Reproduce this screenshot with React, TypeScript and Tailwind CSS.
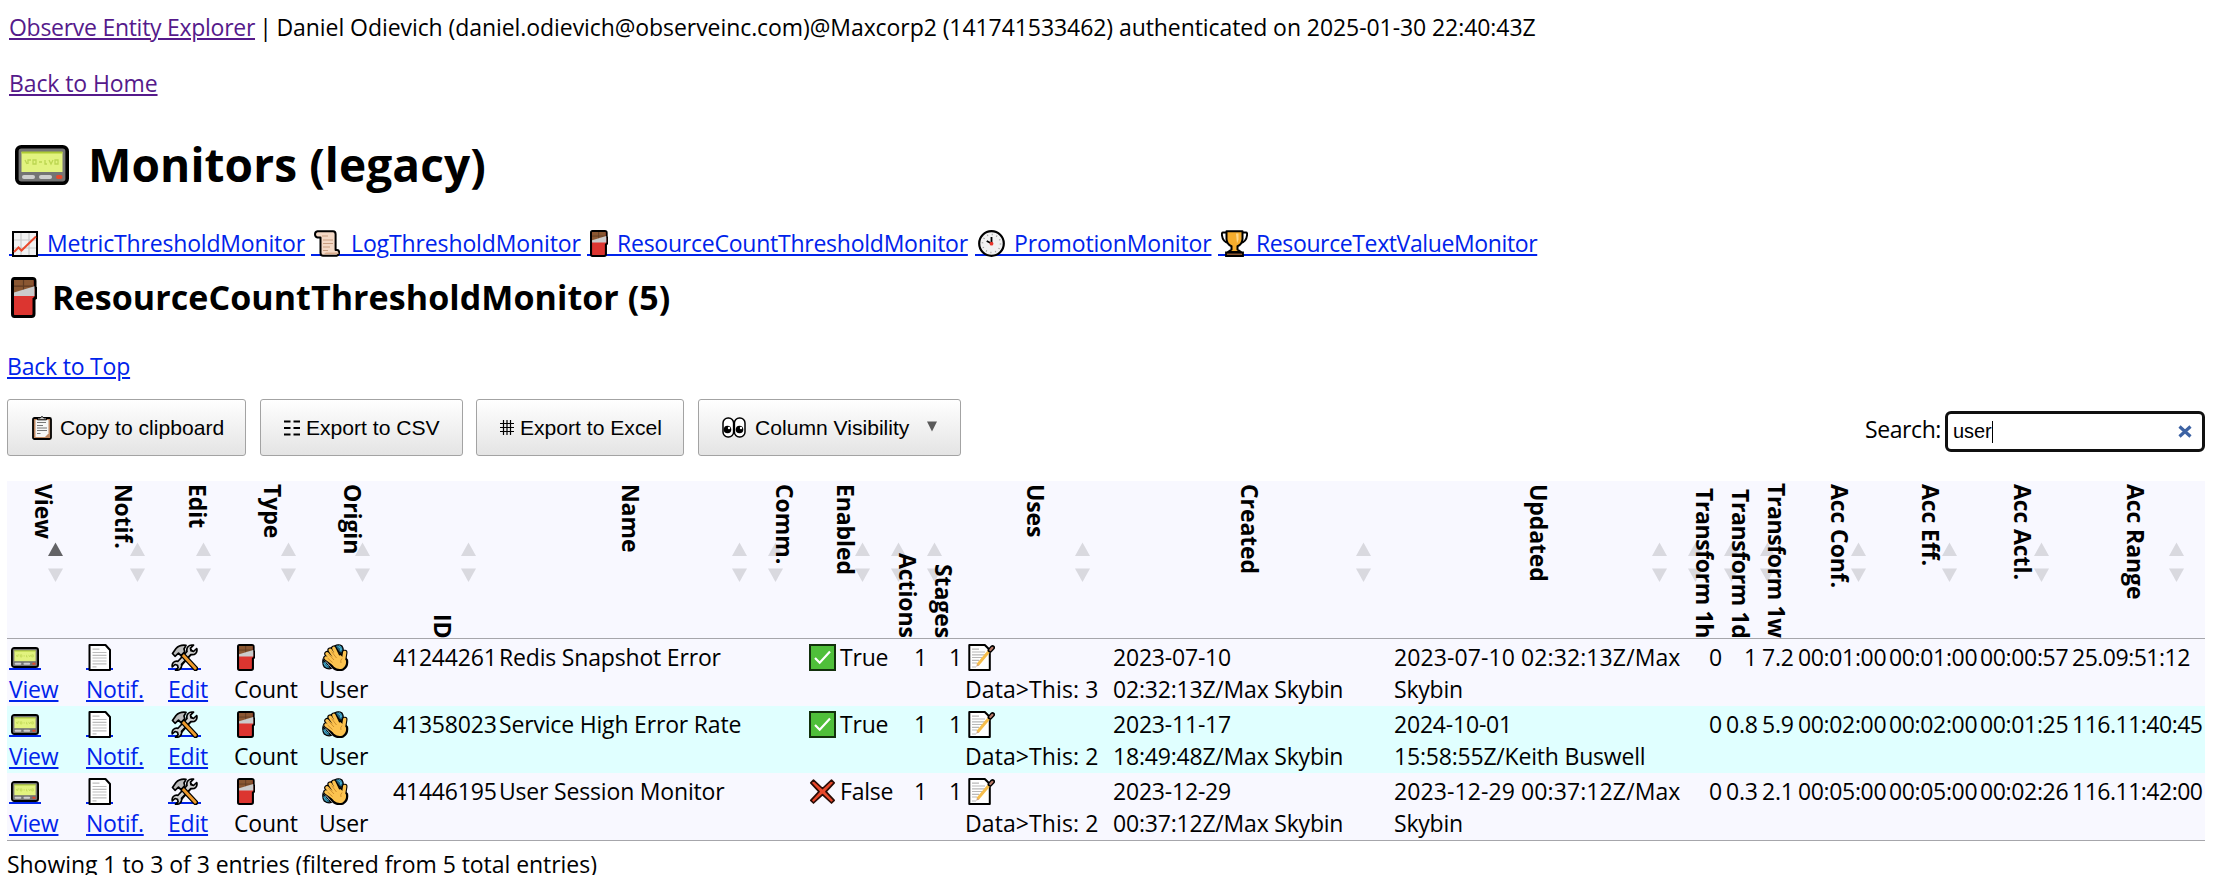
import type { ReactNode } from "react";

type IconProps = { className?: string };

const Pager = ({ className = "" }: IconProps) => (
  <svg viewBox="0 0 54 40" preserveAspectRatio="none" className={className}>
    <rect x="1.8" y="1.8" width="50.4" height="36.4" rx="4.5" fill="#747474" stroke="#000" strokeWidth="3.6" />
    <rect x="6.5" y="7" width="41" height="20" fill="#e2f37f" />
    <rect x="6.5" y="6.5" width="41" height="2" fill="#aecb34" />
    <path d="M10 15l2 4M13 19v-4h3M18 15h3v4h-3zM24 17h3M30 15v4h2M34 15l2 4 2-4M40 15h3v4h-3z" fill="none" stroke="#bcd651" strokeWidth="1.3" />
    <rect x="7" y="30" width="13" height="4" rx="2" fill="#cfcfcf" />
    <rect x="24" y="30" width="13" height="4" rx="2" fill="#cfcfcf" />
    <rect x="41" y="30" width="6.5" height="4" rx="2" fill="#e6492b" />
  </svg>
);

const Chart = ({ className = "" }: IconProps) => (
  <svg viewBox="0 0 26 26" className={className}>
    <rect x="1" y="1" width="24" height="24" fill="#f2f2f2" stroke="#000" strokeWidth="2" />
    <path d="M9 2v22M17 2v22M2 9h22M2 17h22" stroke="#c9c9c9" strokeWidth="1.2" />
    <path d="M2 21l4.5-4.5 3 3L24 5.5" fill="none" stroke="#ea4a2d" strokeWidth="2" />
  </svg>
);

const Scroll = ({ className = "" }: IconProps) => (
  <svg viewBox="0 0 26 27" className={className}>
    <path d="M3.500 1.200H19q2.600 0 2.600 3V20h1.500q2 0 2 2.500t-2.500 3.200H9q-2.500 0-2.500-3V7.500H3.500Q1 7 1 4.300t2.500-3.100z" fill="#f4d9c6" stroke="#000" strokeWidth="2" strokeLinejoin="round" />
    <path d="M8 6h6M9 10h10M9 13.500h10M9 17h7M9 20.500h5" stroke="#c79d80" strokeWidth="1.2" />
    <path d="M12 22.500h12.500v1.500H10z" fill="#d9ad8e" />
  </svg>
);

const Chocolate = ({ className = "" }: IconProps) => (
  <svg viewBox="0 0 26 40" preserveAspectRatio="none" className={className}>
    <path d="M3.500 1.500h18q2.500 0 2.500 2.500v6l1 1v9l-2 1.500V36q0 2.500-2.500 2.500h-17Q1.500 38.500 1.500 36V4q0-2.500 2-2.500z" fill="#dc3530" stroke="#000" strokeWidth="3" />
    <path d="M3 3h19.500v7L3 17z" fill="#8a5732" />
    <path d="M12.500 3v11M3 9h19.500" stroke="#5e3a22" strokeWidth="1.2" />
    <path d="M3 15L23.500 9v9.500H3z" fill="#cbcbcb" />
  </svg>
);

const Clock = ({ className = "" }: IconProps) => (
  <svg viewBox="0 0 27 27" className={className}>
    <circle cx="13.5" cy="13.5" r="12.3" fill="#f1f1f1" stroke="#000" strokeWidth="2.2" />
    <circle cx="13.5" cy="13.5" r="9" fill="none" stroke="#999" strokeWidth="1.5" strokeDasharray="1 3.712" />
    <path d="M13.500 13.500V7M13.500 13.500L8.700 11" stroke="#000" strokeWidth="1.8" />
    <circle cx="13.5" cy="13.7" r="1.9" fill="#e8352b" />
  </svg>
);

const Trophy = ({ className = "" }: IconProps) => (
  <svg viewBox="0 0 27 27" className={className}>
    <path d="M6 2.500H2q-1.500 0-1 3 .8 6.500 6.500 7.500M21 2.500h4q1.500 0 1 3-.8 6.500-6.500 7.500" fill="none" stroke="#000" strokeWidth="2" />
    <path d="M5.500 1.200h16v8q-.5 5.500-5 7v3.300l3.500 2.500h-13l3.500-2.500v-3.300q-4.500-1.500-5-7z" fill="#f6ad2d" stroke="#000" strokeWidth="2" strokeLinejoin="round" />
    <path d="M15 3.500h2.500v6l-1.500 4z" fill="#ffd88a" />
    <path d="M5 22.500h17v3.500H5z" fill="#8a5732" stroke="#000" strokeWidth="1.8" />
  </svg>
);

const Doc = ({ className = "" }: IconProps) => (
  <svg viewBox="0 0 24 27" className={className}>
    <path d="M1.500 1h16l4.500 5v20h-20.500z" fill="#fff" stroke="#000" strokeWidth="2" strokeLinejoin="round" />
    <path d="M4.500 5.200h7M4.500 8.500h14M4.500 11.300h14M4.500 14h14M4.500 17h14M4.500 19.800h14M4.500 22.800h4" stroke="#bdbdbd" strokeWidth="1.2" />
  </svg>
);

const Memo = ({ className = "" }: IconProps) => (
  <svg viewBox="0 0 27 27" className={className}>
    <path d="M1.300 1h15.500l5 5v20H1.300z" fill="#fff" stroke="#000" strokeWidth="2" strokeLinejoin="round" />
    <path d="M4 5.200h7M4 8h13M4 10.800h13M4 13.500h12M4 16.300h7M4 19h5M4 23h4" stroke="#b8b8b8" strokeWidth="1.2" />
    <path d="M9.500 21L22.500 5.500" stroke="#f6bd4b" strokeWidth="3" />
    <path d="M22 6.300L24.600 3.500" stroke="#000" strokeWidth="4.8" strokeLinecap="round" />
    <path d="M22.300 6L24.400 3.800" stroke="#b97a68" strokeWidth="2.2" strokeLinecap="round" />
    <path d="M8 22.800l3-1.200-1.800-1.600z" fill="#c9a48c" />
  </svg>
);

const Tools = ({ className = "" }: IconProps) => (
  <svg viewBox="0 0 27 27" className={className}>
    <path d="M7 22.500L21.500 6" stroke="#000" strokeWidth="5.6" />
    <path d="M25.700 4.500l-3.200 3-2.500-.7-.5-2.600 3-3q-3.300-.8-5.300 1.300t-1.200 5L7 17.300q-2.800-.6-4.700 1.200-1.600 1.800-1 4.500l2.700-2.500 2.500.8.6 2.500-2.600 2.300q3 .6 4.800-1.300t1.200-4.500L19.800 10.500q3 .8 5-1.200 1.700-2 .9-4.800z" fill="#d3d3d3" stroke="#000" strokeWidth="1.7" strokeLinejoin="round" />
    <path d="M11 10L24.500 24.500" stroke="#000" strokeWidth="5.4" strokeLinecap="round" />
    <path d="M11 10L24.300 24.300" stroke="#f09a2b" strokeWidth="2.8" strokeLinecap="round" />
    <path d="M1.500 9.500L5 4.500q3.500-4 10-3.200L13 5l.8 2.700-3.700 4L7.500 9.200 4 12.300z" fill="#bdbdbd" stroke="#000" strokeWidth="1.7" strokeLinejoin="round" />
  </svg>
);

const handLines = "M13 18L5 9.800M14 15L8.200 6.200M16 13L11.800 4.300M11 19L4 14M21.500 16L22.700 8.500";

const Wave = ({ className = "" }: IconProps) => (
  <svg viewBox="0 0 27 27" className={className}>
    <path d="M12.500 2q4-2.500 7.500 0 2 3 .8 6.500l-3 .5zM1 15.500q-.8 4.500 1.200 7.500 3.500 2.500 7 1.500z" fill="#1f5f78" stroke="#000" strokeWidth="1.2" />
    <path d="M15.500 2.200q3.500.8 3.500 5M17.500 1.500q2 2 2 4.500M2.800 18q1 3 4 4.300M1.800 19q1 3.200 3.600 4.500" fill="none" stroke="#4fb9dc" strokeWidth="1" />
    <path d={handLines} stroke="#000" strokeWidth="5.6" strokeLinecap="round" />
    <path d="M11 12l8-2 6 6q1 6-3.500 9.200-5 2.500-10-1.200L6.500 18z" fill="#fcc34f" stroke="#000" strokeWidth="2.2" strokeLinejoin="round" />
    <path d={handLines} stroke="#fcc34f" strokeWidth="3.4" strokeLinecap="round" />
    <path d="M6.500 10l5.500 6M9.500 7.500l5 6.500M5.500 14l5 4.500M19 19q-1-2.500 1-4.500" fill="none" stroke="#cf9030" strokeWidth="1" />
  </svg>
);

const Check = ({ className = "" }: IconProps) => (
  <svg viewBox="0 0 27 27" className={className}>
    <rect x="1" y="1" width="25" height="25" fill="#4fbf3a" stroke="#12300c" strokeWidth="2" />
    <path d="M6 14l4.700 4.700L21 7.500" fill="none" stroke="#fff" strokeWidth="2.2" />
  </svg>
);

const Cross = ({ className = "" }: IconProps) => (
  <svg viewBox="0 0 27 27" className={className}>
    <path d="M4.500 2.200l9 8.300 9-8.300 2.700 2.600-8.200 8.900 8.200 8.600-2.700 2.700-9-8.300-9 8.300-2.700-2.700L10 13.700 1.800 4.800z" fill="#e8482b" stroke="#2a0c06" strokeWidth="1.7" strokeLinejoin="round" />
  </svg>
);

const Clipboard = ({ className = "" }: IconProps) => (
  <svg viewBox="0 0 20 25" className={className}>
    <rect x="1" y="3" width="18" height="21" rx="1.5" fill="#c08a64" stroke="#000" strokeWidth="1.8" />
    <path d="M3.500 5h13v13.500l-3.500 3.500H3.500z" fill="#f7f7f7" />
    <path d="M5 7.500h9M5 10.500h6M5 13h10M5 15.500h10M5 18.500h3.500" stroke="#777" strokeWidth="1" />
    <path d="M5.500 4.800V3H8q2-3 4 0h2.500v1.800z" fill="#d0d0d0" stroke="#000" strokeWidth="1" />
  </svg>
);

const Trigram = ({ className = "" }: IconProps) => (
  <svg viewBox="0 0 16 16" className={className}>
    <path d="M0 1.500h6.500M9.500 1.500H16M0 8h6.500M9.500 8H16M0 14.500h6.500M9.500 14.500H16" stroke="#000" strokeWidth="1.8" />
  </svg>
);

const Hash = ({ className = "" }: IconProps) => (
  <svg viewBox="0 0 14 15" className={className}>
    <path d="M3.500 0v15M7 0v15M10.500 0v15M0 3.500h14M0 7.500h14M0 11.500h14" stroke="#000" strokeWidth="1.2" />
  </svg>
);

const Eyes = ({ className = "" }: IconProps) => (
  <svg viewBox="0 0 24 21" className={className}>
    <rect x="1" y="1" width="10.6" height="19" rx="5" fill="#fff" stroke="#000" strokeWidth="1.5" />
    <rect x="12.4" y="1" width="10.6" height="19" rx="5" fill="#fff" stroke="#000" strokeWidth="1.5" />
    <circle cx="5.5" cy="12.5" r="3.8" />
    <circle cx="17.5" cy="12.5" r="3.8" />
    <circle cx="7" cy="11" r="1.2" fill="#fff" />
    <circle cx="19" cy="11" r="1.2" fill="#fff" />
  </svg>
);

/* An icon in a 32px text line; linked icons carry an underline behind them. */
function Glyph({ children, width, link }: { children: ReactNode; width: string; link?: boolean }) {
  return (
    <span className={`relative flex h-8 shrink-0 ${width}`}>
      {link && <span className="absolute inset-x-0 top-[27px] h-[2px] bg-[#0023eb]" />}
      {children}
    </span>
  );
}

const linkText = "text-[#0023eb] underline decoration-2 underline-offset-[2px]";

const sections = [
  { name: "MetricThresholdMonitor", icon: <Chart className="relative ml-[3px] mt-1 h-[26px] w-[26px]" />, gap: "w-[38px]", box: "w-[302px]", track: "tracking-[-0.17px]" },
  { name: "LogThresholdMonitor", icon: <Scroll className="relative ml-[3px] mt-[3px] h-[27px] w-[26px]" />, gap: "w-[40px]", box: "w-[276px]", track: "tracking-[-0.12px]" },
  { name: "ResourceCountThresholdMonitor", icon: <Chocolate className="relative ml-[3px] mt-[3px] h-[27px] w-[18px]" />, gap: "w-[30px]", box: "w-[388px]", track: "tracking-[-0.24px]" },
  { name: "PromotionMonitor", icon: <Clock className="relative ml-[3px] mt-[3px] h-[27px] w-[27px]" />, gap: "w-[39px]", box: "w-[243px]", track: "tracking-[-0.16px]" },
  { name: "ResourceTextValueMonitor", icon: <Trophy className="relative ml-[3px] mt-[3px] h-[27px] w-[27px]" />, gap: "w-[38px]", box: "w-[330px]", track: "tracking-[-0.38px]" },
];

const columns = [
  { label: "View", width: "w-[77px]" },
  { label: "Notif.", width: "w-[82px]" },
  { label: "Edit", width: "w-[66px]" },
  { label: "Type", width: "w-[85px]" },
  { label: "Origin", width: "w-[74px]" },
  { label: "ID", width: "w-[106px]", numeric: true },
  { label: "Name", width: "w-[271px]" },
  { label: "Comm.", width: "w-[36px]" },
  { label: "Enabled", width: "w-[87px]" },
  { label: "Actions", width: "w-[36px]", numeric: true },
  { label: "Stages", width: "w-[36px]", numeric: true },
  { label: "Uses", width: "w-[148px]" },
  { label: "Created", width: "w-[281px]" },
  { label: "Updated", width: "w-[296px]" },
  { label: "Transform 1h", width: "w-[36px]", numeric: true, tight: true },
  { label: "Transform 1d", width: "w-[36px]", numeric: true, tight: true },
  { label: "Transform 1w", width: "w-[36px]", numeric: true, tight: true },
  { label: "Acc Conf.", width: "w-[91px]" },
  { label: "Acc Eff.", width: "w-[91px]" },
  { label: "Acc Actl.", width: "w-[92px]" },
  { label: "Acc Range", width: "w-[135px]" },
];

const rows = [
  { id: "41244261", name: "Redis Snapshot Error", enabled: true, uses: 3, created: ["2023-07-10", "02:32:13Z/Max Skybin"], updated: [<span className="tracking-[0.1px]">2023-07-10 02:32:13Z/Max</span>, "Skybin"], t: ["0", "1", "7.2"], acc: ["00:01:00", "00:01:00", "00:00:57"], range: "25.09:51:12" },
  { id: "41358023", name: "Service High Error Rate", enabled: true, uses: 2, created: ["2023-11-17", "18:49:48Z/Max Skybin"], updated: ["2024-10-01", "15:58:55Z/Keith Buswell"], t: ["0", "0.8", "5.9"], acc: ["00:02:00", "00:02:00", "00:01:25"], range: "116.11:40:45" },
  { id: "41446195", name: "User Session Monitor", enabled: false, uses: 2, created: ["2023-12-29", "00:37:12Z/Max Skybin"], updated: [<span className="tracking-[0.1px]">2023-12-29 00:37:12Z/Max</span>, "Skybin"], t: ["0", "0.3", "2.1"], acc: ["00:05:00", "00:05:00", "00:02:26"], range: "116.11:42:00" },
];

function Cell({ lines, right }: { lines: ReactNode[]; right?: boolean }) {
  return (
    <td className={`whitespace-nowrap px-[2px] pt-[2px] pb-px align-top ${right ? "text-right" : "text-left"}`}>
      {lines.map((l, i) => (
        <div key={i} className="h-8">{l}</div>
      ))}
    </td>
  );
}

const button = "flex h-[57px] items-center rounded-[3px] border border-[#a3a3a3] bg-linear-to-b from-white to-[#e4e4e4] font-['Liberation_Sans',sans-serif] text-[21.1px] tracking-normal whitespace-nowrap";

export default function App() {
  return (
    <div className="h-[888px] w-full overflow-hidden bg-white pl-[7px] pt-[11px] font-['Open_Sans',sans-serif] text-[23px] leading-8 tracking-[-0.2px] text-black">
      <header className="flex h-14 pl-[2px] whitespace-pre">
        <a className="tracking-[-0.28px] text-[#551a8b] underline decoration-2 underline-offset-[2px]">Observe Entity Explorer</a>
        <span className="-ml-px tracking-[-0.7px]"> | </span>
        <span className="tracking-[-0.07px]">Daniel Odievich (daniel.odievich@observeinc.com)@Maxcorp2 (141741533462) authenticated on 2025-01-30 22:40:43Z</span>
      </header>
      <nav className="h-[65px] pl-[2px]">
        <a className="tracking-[-0.1px] text-[#551a8b] underline decoration-2 underline-offset-[2px]">Back to Home</a>
      </nav>
      <h1 className="flex h-[95px] text-[46px] leading-[64px] font-bold tracking-[0.1px]">
        <Pager className="mr-[19px] ml-2 mt-[13px] h-[40px] w-[54px]" />
        Monitors (legacy)
      </h1>
      <nav className="flex h-[46px] pl-[2px] whitespace-nowrap">
        {sections.map((s) => (
          <a key={s.name} className={`flex shrink-0 ${s.box}`}>
            <Glyph width={s.gap} link>{s.icon}</Glyph>
            <span className={`${linkText} ${s.track}`}>{s.name}</span>
          </a>
        ))}
      </nav>
      <h2 className="flex h-[77px] text-[34px] leading-[48px] font-bold tracking-[0.07px]">
        <Chocolate className="mr-[15px] ml-1 mt-1 h-[41px] w-[26px]" />
        ResourceCountThresholdMonitor (5)
      </h2>
      <div className="h-[49px]">
        <a className={linkText}>Back to Top</a>
      </div>

      <div className="flex h-[82px] w-[2198px] justify-between">
        <div className="flex">
          <button className={`${button} mr-[14px] w-[239px] pl-6`}>
            <Clipboard className="mr-[8px] h-[25px] w-[20px]" />Copy to clipboard
          </button>
          <button className={`${button} mr-[13px] w-[203px] pl-[23px]`}>
            <Trigram className="mr-[6px] h-4 w-4" />Export to CSV
          </button>
          <button className={`${button} mr-[14px] w-[208px] pl-[23px]`}>
            <Hash className="mr-[6px] h-[15px] w-[14px]" />Export to Excel
          </button>
          <button className={`${button} w-[263px] pl-[23px]`}>
            <Eyes className="mr-[9px] h-[21px] w-6" />Column Visibility
            <svg viewBox="0 0 10 10" className="mb-[2px] ml-[18px] h-[11px] w-[10px]"><path d="M0 0h10L5 10z" fill="#5a5a5a" /></svg>
          </button>
        </div>
        <label className="flex pt-[12px]">
          <span className="mt-[2px] mr-[4px] tracking-[-0.4px]">Search:</span>
          <span className="flex h-[41px] w-[260px] items-center rounded-[6px] border-3 border-[#101010] bg-white pl-[5px] pr-[10px]">
            <span className="mb-[2px] font-['Liberation_Sans',sans-serif] text-[20px] tracking-[-0.1px]">user</span>
            <span className="h-[22px] w-px bg-black" />
            <svg viewBox="0 0 14 13" className="ml-auto h-[13px] w-[14px]"><path d="M1.500 1.500l11 10M12.500 1.500l-11 10" stroke="#3c62a3" strokeWidth="3.2" /></svg>
          </span>
        </label>
      </div>

      <table className="w-[2198px] table-fixed border-separate border-spacing-0">
        <thead>
          <tr className="bg-[#f8f8ff]">
            {columns.map((c, i) => (
              <th key={c.label} className={`h-[158px] border-b border-[#a6a6ab] p-0 align-top ${c.width}`}>
                <div className={`relative flex h-[157px] justify-center ${c.numeric ? "items-end" : "items-start"}`}>
                  <span className={`mt-[2.5px] mr-[3px] leading-8 font-bold whitespace-nowrap [writing-mode:vertical-rl] ${c.tight ? "tracking-[-0.38px]" : "tracking-[-0.1px]"}`}>{c.label}</span>
                  <svg viewBox="0 0 15 40" className="absolute top-[61px] right-[21.5px] h-[40px] w-[15px]">
                    <path d="M7.500 0.500L15 14H0z" fill="#000" fillOpacity={i === 0 ? 0.6 : 0.125} />
                    <path d="M0 26.500h15L7.500 40z" fill="#000" fillOpacity={0.125} />
                  </svg>
                </div>
              </th>
            ))}
          </tr>
        </thead>
        <tbody>
          {rows.map((r, i) => (
            <tr key={r.id} className={i === 1 ? "bg-[#e0ffff]" : "bg-[#f8f8ff]"}>
              <Cell lines={[<Glyph width="w-[32px]" link><Pager className="relative ml-[2px] mt-[6px] h-[21px] w-[28px]" /></Glyph>, <a className={linkText}>View</a>]} />
              <Cell lines={[<Glyph width="w-[27px]" link><Doc className="relative ml-[2px] mt-[3px] h-[27px] w-6" /></Glyph>, <a className={linkText}>Notif.</a>]} />
              <Cell lines={[<Glyph width="w-[33px]" link><Tools className="relative ml-[3px] mt-[3px] h-[27px] w-[27px]" /></Glyph>, <a className={linkText}>Edit</a>]} />
              <Cell lines={[<Glyph width="w-[24px]"><Chocolate className="ml-[3px] mt-[3px] h-[27px] w-[18px]" /></Glyph>, "Count"]} />
              <Cell lines={[<Glyph width="w-[32px]"><Wave className="ml-[3px] mt-[3px] h-[27px] w-[27px]" /></Glyph>, "User"]} />
              <Cell right lines={[r.id]} />
              <Cell lines={[<span className="tracking-[-0.18px]">{r.name}</span>]} />
              <Cell lines={[]} />
              <Cell lines={[<span className="flex"><Glyph width="w-[34px]">{r.enabled ? <Check className="ml-[3px] mt-[3px] h-[27px] w-[27px]" /> : <Cross className="ml-[3px] mt-[3px] h-[27px] w-[27px]" />}</Glyph>{r.enabled ? "True" : "False"}</span>]} />
              <Cell right lines={[<span className="-mr-[2px]">1</span>]} />
              <Cell right lines={[<span className="-mr-px">1</span>]} />
              <Cell lines={[<Glyph width="w-[32px]"><Memo className="ml-[3px] mt-[3px] h-[27px] w-[27px]" /></Glyph>, <span className="tracking-[0.1px]">{`Data>This: ${r.uses}`}</span>]} />
              <Cell lines={r.created} />
              <Cell lines={r.updated} />
              {r.t.map((v, k) => <Cell key={k} right lines={[<span className={k > 0 ? "mr-px" : ""}>{v}</span>]} />)}
              {r.acc.map((v, k) => <Cell key={k} lines={[<span className="tracking-[-0.35px]">{v}</span>]} />)}
              <Cell lines={[<span className="tracking-[-0.5px]">{r.range}</span>]} />
            </tr>
          ))}
        </tbody>
      </table>
      <div className="h-[35px] w-[2198px] overflow-hidden border-t border-[#a6a6ab] pt-[7px] tracking-[-0.05px]">
        Showing 1 to 3 of 3 entries (filtered from 5 total entries)
      </div>
    </div>
  );
}
